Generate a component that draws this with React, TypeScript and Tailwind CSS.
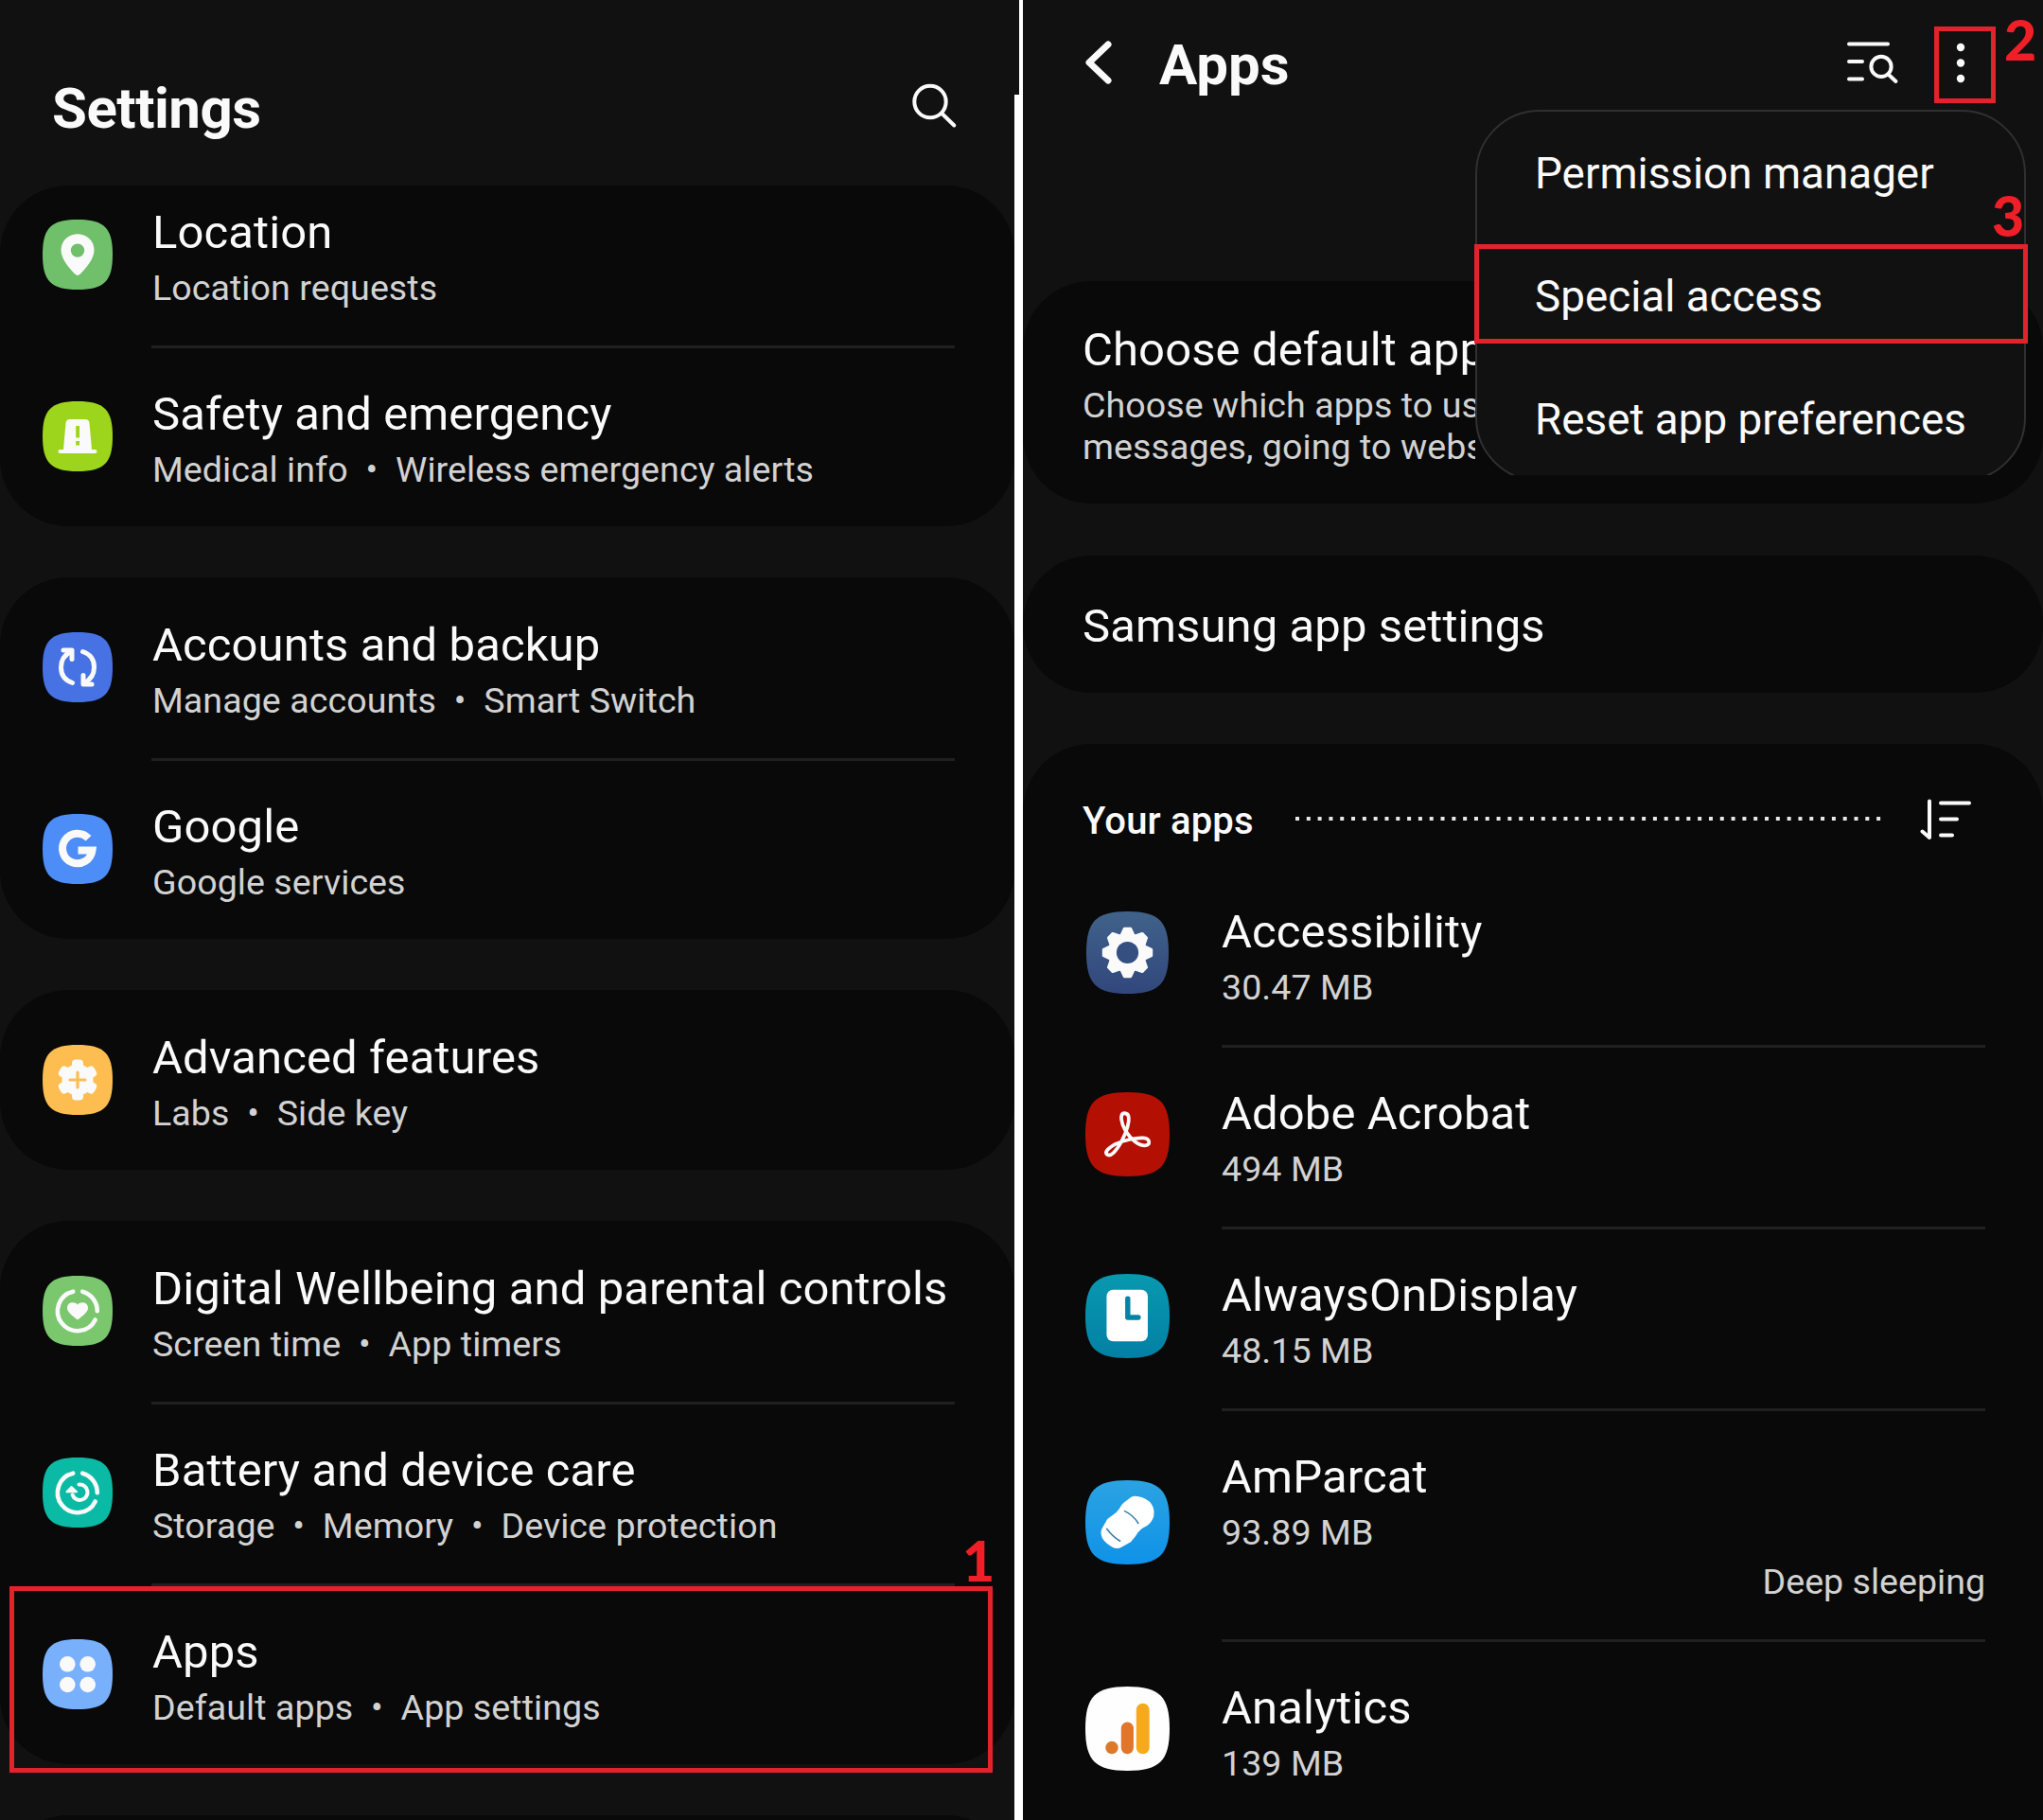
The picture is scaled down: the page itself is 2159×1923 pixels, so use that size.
import React from "react";

const SQUIRCLE = "M0 50C0 12 12 0 50 0S100 12 100 50 88 100 50 100 0 88 0 50Z";

function Tile({
  size,
  view,
  fill,
  to,
  id,
  children,
}: {
  size: number;
  view: number;
  fill: string;
  to?: string;
  id?: string;
  children: React.ReactNode;
}) {
  return (
    <svg width={size} height={size} viewBox={`0 0 ${view} ${view}`} className="block shrink-0">
      {to && (
        <defs>
          <linearGradient id={id} x1="0" y1="0" x2="0" y2="1">
            <stop offset="0" stopColor={fill} />
            <stop offset="1" stopColor={to} />
          </linearGradient>
        </defs>
      )}
      <path d={SQUIRCLE} transform={`scale(${view / 100})`} fill={to ? `url(#${id})` : fill} />
      {children}
    </svg>
  );
}

const SettingTile = ({ fill, children }: { fill: string; children: React.ReactNode }) => (
  <Tile size={74} view={74} fill={fill}>
    {children}
  </Tile>
);

const LocationIcon = () => (
  <SettingTile fill="#70bf6a">
    <path
      fillRule="evenodd"
      fill="#fafafa"
      d="M37 15.3C27 15.3 19.5 22.8 19.5 32.3C19.5 42 28 51 34.2 57.6Q37 60.2 39.8 57.6C46 51 54.5 42 54.5 32.3C54.5 22.8 47 15.3 37 15.3ZM37 25.4A7.2 7.2 0 1 1 37 39.8A7.2 7.2 0 1 1 37 25.4Z"
    />
  </SettingTile>
);

const SafetyIcon = () => (
  <SettingTile fill="#9cd51c">
    <path d="M24.500 23Q25 19 29 19H45Q49 19 49.500 23L52 51H55.500Q57.500 51 57.500 53T55.500 55H18.500Q16.500 55 16.500 53T18.500 51H22Z" fill="#fafafa" />
    <rect x="35.200" y="26" width="3.800" height="12.500" fill="#9cd51c" />
    <rect x="35.200" y="42" width="3.800" height="4.500" fill="#9cd51c" />
  </SettingTile>
);

const AccountsIcon = () => (
  <SettingTile fill="#4672e4">
    <g fill="none" stroke="#fafafa" strokeWidth="5" strokeLinecap="round" strokeLinejoin="round">
      <path d="M30 20.500C23 24 19.500 30 19.500 37C19.500 45 24 51 31.500 53.500" />
      <path d="M22 19H31V28.500" />
      <path d="M44 53.500C51 50 54.500 44 54.500 37C54.500 29 50 23 42.500 20.500" />
      <path d="M52 55H43V45.500" />
    </g>
  </SettingTile>
);

const GoogleIcon = () => (
  <SettingTile fill="#4d8df8">
    <path d="M48.500 25.800A15.800 15.800 0 1 0 52.500 38.500H37.500" fill="none" stroke="#fafafa" strokeWidth="8" />
  </SettingTile>
);

const AdvancedIcon = () => (
  <SettingTile fill="#fdbd50">
    <g fill="#fafafa">
      <circle cx="37" cy="37" r="16.500" />
      {[0, 60, 120].map((a) => (
        <rect key={a} x="31" y="15.500" width="12" height="43" rx="4" transform={`rotate(${a} 37 37)`} />
      ))}
    </g>
    <path d="M37 29V45M29 37H45" stroke="#fdbd50" strokeWidth="3.200" strokeLinecap="round" />
  </SettingTile>
);

const Ring = () => (
  <g fill="none" stroke="#fafafa" strokeWidth="4.600" strokeLinecap="round">
    <path d="M42.200 16.700A21 21 0 0 1 57.800 37.200" />
    <path d="M55.700 46.500A21 21 0 1 1 32.200 16.700" />
  </g>
);

const WellbeingIcon = () => (
  <SettingTile fill="#7ac76e">
    <Ring />
    <path d="M37 30.500C34.500 27 26 27 26 34C26 38.500 32 42.500 35.500 45.500Q37 46.800 38.500 45.500C42 42.500 48 38.500 48 34C48 27 39.500 27 37 30.500Z" fill="#fafafa" />
  </SettingTile>
);

const BatteryIcon = () => (
  <SettingTile fill="#0bbaa4">
    <Ring />
    <path d="M38.500 28.600A8.200 8.200 0 1 1 31.600 39.500" fill="none" stroke="#fafafa" strokeWidth="4" strokeLinecap="round" />
    <path d="M30.500 31L25.500 36.300H36Z" fill="#fafafa" stroke="#fafafa" strokeWidth="2" strokeLinejoin="round" />
  </SettingTile>
);

const AppsIcon = () => (
  <SettingTile fill="#79b0fc">
    <g fill="#fafafa">
      <circle cx="26.300" cy="26.300" r="8.300" />
      <circle cx="47.700" cy="26.300" r="8.300" />
      <circle cx="26.300" cy="48" r="8.300" />
      <circle cx="47.700" cy="48" r="8.300" />
    </g>
  </SettingTile>
);

const AccessibilityIcon = () => (
  <Tile size={87} view={87} fill="#40628a" to="#31477c" id="acc">
    <g fill="#fafafa">
      <circle cx="43.500" cy="43.500" r="20.500" />
      {[0, 45, 90, 135, 180, 225, 270, 315].map((a) => (
        <path key={a} d="M35 26L39 17.600Q39.300 16.800 40.300 16.800H46.700Q47.700 16.800 48 17.600L52 26Z" transform={`rotate(${a} 43.500 43.500)`} />
      ))}
    </g>
    <circle cx="43.500" cy="43.500" r="11.600" fill="#354f80" />
  </Tile>
);

const AcrobatIcon = () => (
  <Tile size={89} view={90} fill="#b40f03">
    <path
      d="M41.700 22.500C36 22.500 38.500 34 43 41.500C49 51 57 57 63.500 57C70 57 69.500 49.500 62 49C54 48.500 40 51.500 32 55.500C24 60 20.500 64 23 66.500C27 69.500 33 63 39 52C44 42 47 33 46.300 27C46 24 44.500 22.500 41.700 22.500Z"
      fill="none"
      stroke="#fafafa"
      strokeWidth="3.800"
      strokeLinejoin="round"
    />
  </Tile>
);

const AodIcon = () => (
  <Tile size={89} view={90} fill="#0899b0" to="#0380a4" id="aod">
    <rect x="22.700" y="17" width="44" height="55" rx="7" fill="#fff" />
    <path d="M45.300 26.500V46.500H56.500" fill="none" stroke="#0484a4" strokeWidth="5.500" strokeLinecap="round" strokeLinejoin="round" />
  </Tile>
);

const CarIcon = () => (
  <Tile size={89} view={90} fill="#2ba3e2" to="#0f92e8" id="car">
    <path
      d="M41 24L49 18Q53 15.500 61 18.500Q70 22 72.500 29Q74 33 73 39Q71 45 66 48.500L60.500 51.500Q56 55 53.500 60L48.500 66L38.500 71.500Q34 74.500 28 71Q18 65.500 16.800 58Q16 55 17.500 52L23.500 41.500L29 37.500Q34 34 36.500 30Q38.500 26 41 24Z"
      fill="#fff"
    />
    <g fill="none" stroke="#3a7fa8" strokeWidth="1.600" strokeLinecap="round">
      <path d="M42 33Q51 37 56.500 46" />
      <path d="M23 52Q29 60 37 65" />
    </g>
  </Tile>
);

const AnalyticsIcon = () => (
  <Tile size={89} view={90} fill="#fefefe">
    <circle cx="28.300" cy="65.200" r="6.800" fill="#dc7a2c" />
    <rect x="38.200" y="38" width="13.300" height="34" rx="6.650" fill="#e0752b" />
    <rect x="54.400" y="18" width="14" height="54" rx="7" fill="#f6a91d" />
  </Tile>
);

type Setting = { title: string; sub: string; icon: React.ReactNode };

const groups: Setting[][] = [
  [
    { title: "Location", sub: "Location requests", icon: <LocationIcon /> },
    { title: "Safety and emergency", sub: "Medical info  •  Wireless emergency alerts", icon: <SafetyIcon /> },
  ],
  [
    { title: "Accounts and backup", sub: "Manage accounts  •  Smart Switch", icon: <AccountsIcon /> },
    { title: "Google", sub: "Google services", icon: <GoogleIcon /> },
  ],
  [{ title: "Advanced features", sub: "Labs  •  Side key", icon: <AdvancedIcon /> }],
  [
    { title: "Digital Wellbeing and parental controls", sub: "Screen time  •  App timers", icon: <WellbeingIcon /> },
    { title: "Battery and device care", sub: "Storage  •  Memory  •  Device protection", icon: <BatteryIcon /> },
    { title: "Apps", sub: "Default apps  •  App settings", icon: <AppsIcon /> },
  ],
];

const apps = [
  { title: "Accessibility", size: "30.47 MB", icon: <AccessibilityIcon /> },
  { title: "Adobe Acrobat", size: "494 MB", icon: <AcrobatIcon /> },
  { title: "AlwaysOnDisplay", size: "48.15 MB", icon: <AodIcon /> },
  { title: "AmParcat", size: "93.89 MB", icon: <CarIcon />, note: "Deep sleeping" },
  { title: "Analytics", size: "139 MB", icon: <AnalyticsIcon /> },
];

const Title = ({ children }: { children: React.ReactNode }) => (
  <div className="text-[49px] leading-[56px] tracking-[0.1px] text-[#fafafa]">{children}</div>
);
const Sub = ({ children }: { children: React.ReactNode }) => (
  <div className="mt-[8px] text-[37.6px] leading-[44px] tracking-[0.06px] text-[#d2d2d2]">{children}</div>
);

function SettingsPanel() {
  return (
    <section className="relative w-[1077px] shrink-0 overflow-hidden bg-[#111111]">
      <header className="flex h-[196px] justify-between pl-[55px] pr-[60px] pt-[79px]">
        <h1 className="text-[60px] font-bold leading-[72px] tracking-[-0.5px] text-[#fafafa]">Settings</h1>
        <svg width="56" height="58" viewBox="0 0 56 58" fill="none" stroke="#fafafa" strokeWidth="4" strokeLinecap="round">
          <circle cx="22" cy="28.500" r="16.700" />
          <path d="M34.500 41L47.300 53.500" />
        </svg>
      </header>
      <div className="flex w-[1072px] flex-col gap-[54px]">
        {groups.map((g, gi) => (
          <div key={gi} className="overflow-hidden rounded-[72px] bg-[#090909]">
            {g.map((s, i) => (
              <div
                key={s.title}
                className={`flex pl-[45px] pr-[63px] ${i === g.length - 1 ? "h-[190px]" : "h-[192px]"} ${gi === 0 && i === 0 ? "-mt-[22px]" : ""}`}
              >
                <div className="mr-[41px] pt-[58px]">{s.icon}</div>
                <div className={`flex-1 whitespace-pre pt-[44px] ${i < g.length - 1 ? "-mb-[2px] border-b-[3px] border-[#202020]" : ""}`}>
                  <div className="pl-[1px]">
                    <Title>{s.title}</Title>
                    <Sub>{s.sub}</Sub>
                  </div>
                </div>
              </div>
            ))}
          </div>
        ))}
        <div className="h-[190px] rounded-[72px] bg-[#090909]" />
      </div>
      <div className="absolute bottom-0 right-0 top-[100px] w-[5px] bg-white" />
      <div className="absolute left-[10px] top-[1676px] h-[197px] w-[1039px] border-[5px] border-[#e3232b]" />
      <div className="absolute left-[1017px] top-[1613px] font-[Lato] text-[59px] font-black leading-[72px] text-[#f01f27]">1</div>
    </section>
  );
}

function OverflowMenu() {
  return (
    <div className="absolute left-[478px] top-[116px] h-[386px] w-[582px] overflow-hidden">
      <div className="flex h-[393px] flex-col rounded-[68px] border-2 border-[#303030] bg-[#111111] pl-[61px] pt-[36px] text-[45.8px] leading-[60px] text-[#fafafa]">
        <div className="mb-[70px]">Permission manager</div>
        <div className="mb-[70px]">Special access</div>
        <div>Reset app preferences</div>
      </div>
    </div>
  );
}

function AppsPanel() {
  return (
    <section className="relative ml-[4px] w-[1078px] shrink-0 overflow-hidden bg-[#111111]">
      <header className="flex h-[297px] items-start">
        <svg width="36" height="56" viewBox="0 0 36 56" className="ml-[61px] mt-[38px]" fill="none" stroke="#fafafa" strokeWidth="7" strokeLinecap="round" strokeLinejoin="round">
          <path d="M29 9L9 28L29 47" />
        </svg>
        <h1 className="ml-[47px] mt-[33px] text-[60px] font-bold leading-[72px] text-[#fafafa]">Apps</h1>
        <svg width="60" height="50" viewBox="0 0 60 50" className="ml-auto mt-[40px]" fill="none" stroke="#fafafa" strokeWidth="4" strokeLinecap="round">
          <path d="M5 6.500H46M5 25H19M5 43.500H19" />
          <circle cx="39" cy="30.400" r="10.600" />
          <path d="M47 39L54.500 46" />
        </svg>
        <svg width="20" height="50" viewBox="0 0 20 50" className="ml-[53px] mr-[77px] mt-[40px]" fill="#fafafa">
          <circle cx="10" cy="10" r="4.200" />
          <circle cx="10" cy="26.500" r="4.200" />
          <circle cx="10" cy="43" r="4.200" />
        </svg>
      </header>
      <div className="h-[235px] rounded-[72px] bg-[#090909] pl-[63px] pt-[45px]">
        <div className="w-[415px] overflow-hidden whitespace-nowrap">
          <Title>Choose default apps</Title>
          <Sub>
            Choose which apps to use for
            <br />
            messages, going to websites
          </Sub>
        </div>
      </div>
      <div className="mt-[55px] flex h-[145px] items-center rounded-[72px] bg-[#090909] pl-[63px] pt-[5px]">
        <Title>Samsung app settings</Title>
      </div>
      <div className="mt-[54px] h-[1200px] rounded-[72px] bg-[#090909]">
        <div className="flex h-[127px] items-start pl-[63px] pt-[56px]">
          <h2 className="mt-[2px] text-[40px] font-medium leading-[48px] tracking-[0.15px] text-[#fafafa]">Your apps</h2>
          <svg width="620" height="4" className="ml-[44px] mt-[21px]">
            <path d="M0 2H620" stroke="#e8e8e8" strokeWidth="4" strokeDasharray="4 7.810" />
          </svg>
          <svg width="60" height="50" viewBox="0 0 60 50" className="ml-auto mr-[76px]" fill="none" stroke="#fafafa" strokeWidth="4" strokeLinecap="round" strokeLinejoin="round">
            <path d="M8.500 36.500L16 43V4.500" />
            <path d="M28 6.500H58M28 23.500H45M28 40.500H40" />
          </svg>
        </div>
        {apps.map((a) => (
          <div key={a.title} className={`flex pr-[61px] ${a.note ? "h-[244px]" : "h-[192px]"}`}>
            <div className="flex w-[210px] items-center justify-center pb-[5px] pl-[11px]">{a.icon}</div>
            <div className="-mb-[2px] flex-1 border-b-[3px] border-[#202020] pt-[44px]">
              <Title>{a.title}</Title>
              <Sub>{a.size}</Sub>
              {a.note && <div className="mt-[8px] text-right text-[37.6px] leading-[44px] text-[#d2d2d2]">{a.note}</div>}
            </div>
          </div>
        ))}
      </div>
      <OverflowMenu />
      <div className="absolute left-[963px] top-[28px] h-[81px] w-[65px] border-[5px] border-[#e3232b]" />
      <div className="absolute left-[477px] top-[258px] h-[105px] w-[585px] border-[5px] border-[#e3232b]" />
      <div className="absolute left-[1037px] top-[6px] font-[Lato] text-[59px] font-black leading-[72px] text-[#f01f27]">2</div>
      <div className="absolute left-[1024px] top-[192px] font-[Lato] text-[59px] font-black leading-[72px] text-[#f01f27]">3</div>
    </section>
  );
}

export default function App() {
  return (
    <main className="flex h-[1923px] w-[2159px] overflow-hidden bg-white font-[Roboto,sans-serif]">
      <SettingsPanel />
      <AppsPanel />
    </main>
  );
}
